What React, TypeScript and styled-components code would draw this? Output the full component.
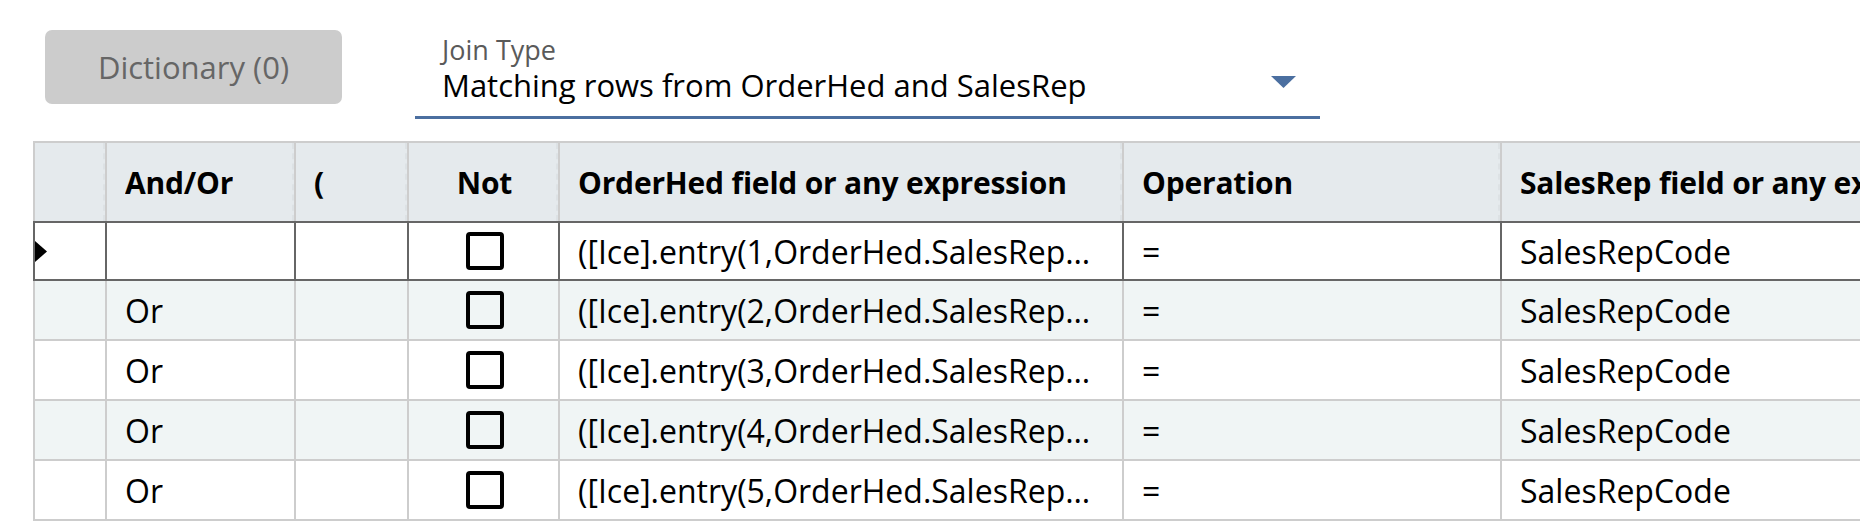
import React from "react";
import styled, { createGlobalStyle } from "styled-components";

const GlobalStyle = createGlobalStyle`
    html, body {
        margin: 0;
        padding: 0;
        background: #ffffff;
        overflow: hidden;
    }
    body {
        font-family: "Open Sans", "Noto Sans", sans-serif;
        color: #000;
    }
`;

const Page = styled.div`
    width: 1860px;
    height: 530px;
    overflow: hidden;
`;

const Toolbar = styled.div`
    display: flex;
    align-items: flex-start;
    padding: 30px 0 0 45px;
`;

const DictionaryButton = styled.button`
    width: 297px;
    height: 74px;
    border: none;
    border-radius: 7px;
    background: #cccccc;
    color: #666666;
    font-family: inherit;
    font-size: 31px;
    padding: 0;
    cursor: default;
`;

const Field = styled.div`
    box-sizing: border-box;
    width: 905px;
    margin: 4px 0 0 73px;
    padding: 0 24px 12px 27px;
    border-bottom: 3px solid #4b6fa0;
`;

const FieldLabel = styled.div`
    font-size: 27px;
    line-height: 32px;
    color: #5a5a5a;
`;

const ValueRow = styled.div`
    display: flex;
    align-items: center;
    justify-content: space-between;
`;

const FieldValue = styled.div`
    font-size: 31px;
    line-height: 38px;
    color: #000;
`;

const Caret = styled.svg`
    width: 25px;
    height: 12px;
    margin-bottom: 6px;
    fill: #4b6fa0;
`;

const Grid = styled.div`
    margin: 22px 0 0 33px;
    width: max-content;
`;

const Row = styled.div<{ $selected?: boolean; $alt?: boolean; $header?: boolean }>`
    display: flex;
    box-sizing: border-box;
    height: ${(p) => (p.$header ? 80 : 60)}px;
    background: ${(p) => (p.$header ? "#e5eaed" : p.$alt ? "#f0f5f5" : "#ffffff")};
    border-left: 2px solid ${(p) => (p.$selected ? "#666666" : "#cdcdcd")};
    border-top: ${(p) =>
        p.$header ? "2px solid #cdcdcd" : p.$selected ? "2px solid #666666" : "none"};
    border-bottom: ${(p) => (p.$header ? "none" : `2px solid ${p.$selected ? "#666666" : "#cdcdcd"}`)};
`;

const Cell = styled.div<{ $w: number; $center?: boolean; $dark?: boolean; $header?: boolean }>`
    position: relative;
    box-sizing: border-box;
    flex: 0 0 ${(p) => p.$w}px;
    width: ${(p) => p.$w}px;
    display: flex;
    align-items: center;
    justify-content: ${(p) => (p.$center ? "center" : "flex-start")};
    padding: 0 16px 0 18px;
    border-right: 2px solid ${(p) => (p.$dark ? "#666666" : "#cdcdcd")};
    font-size: ${(p) => (p.$header ? 30 : 32)}px;
    font-weight: ${(p) => (p.$header ? 700 : 400)};
    letter-spacing: ${(p) => (p.$header ? "-0.2px" : "0")};
    color: #000;
    overflow: hidden;

    ${(p) =>
        p.$header &&
        `
        &::after {
            content: "";
            position: absolute;
            top: 0;
            bottom: 0;
            right: 0;
            border-right: 2px dashed #dde2e5;
        }
    `}
`;

const CellText = styled.span`
    min-width: 0;
    overflow: hidden;
    text-overflow: ellipsis;
    white-space: nowrap;
`;

const Indicator = styled.svg`
    width: 12px;
    height: 21px;
    margin-left: -18px;
    fill: #000;
`;

const CheckBox = styled.span`
    box-sizing: border-box;
    width: 38px;
    height: 38px;
    border: 4px solid #000;
    border-radius: 4px;
    background: transparent;
`;

const widths = [72, 189, 113, 151, 564, 378, 540];

const headers = [
    "",
    "And/Or",
    "(",
    "Not",
    "OrderHed field or any expression",
    "Operation",
    "SalesRep field or any ex",
];

// the grid shows the expression column already clipped
const rows = [1, 2, 3, 4, 5].map((n) => ({
    andOr: n === 1 ? "" : "Or",
    expr: `([Ice].entry(${n},OrderHed.SalesRep\u2026`,
    op: "=",
    right: "SalesRepCode",
}));

const App = () => {
    return (
        <Page>
            <GlobalStyle />
            <Toolbar>
                <DictionaryButton>Dictionary (0)</DictionaryButton>
                <Field>
                    <FieldLabel>Join Type</FieldLabel>
                    <ValueRow>
                        <FieldValue>Matching rows from OrderHed and SalesRep</FieldValue>
                        <Caret viewBox="0 0 25 12">
                            <polygon points="0,0 25,0 12.5,12" />
                        </Caret>
                    </ValueRow>
                </Field>
            </Toolbar>
            <Grid>
                <Row $header>
                    {headers.map((h, i) => (
                        <Cell key={i} $w={widths[i]} $header $center={i === 3}>
                            <CellText>{h}</CellText>
                        </Cell>
                    ))}
                </Row>
                {rows.map((r, idx) => {
                    const selected = idx === 0;
                    return (
                        <Row key={idx} $selected={selected} $alt={idx % 2 === 1}>
                            <Cell $w={widths[0]} $dark={selected}>
                                {selected && (
                                    <Indicator viewBox="0 0 12 21">
                                        <polygon points="0,0 12,10.5 0,21" />
                                    </Indicator>
                                )}
                            </Cell>
                            <Cell $w={widths[1]} $dark={selected}>
                                <CellText>{r.andOr}</CellText>
                            </Cell>
                            <Cell $w={widths[2]} $dark={selected} />
                            <Cell $w={widths[3]} $dark={selected} $center>
                                <CheckBox />
                            </Cell>
                            <Cell $w={widths[4]} $dark={selected}>
                                <CellText>{r.expr}</CellText>
                            </Cell>
                            <Cell $w={widths[5]} $dark={selected}>
                                <CellText>{r.op}</CellText>
                            </Cell>
                            <Cell $w={widths[6]} $dark={selected}>
                                <CellText>{r.right}</CellText>
                            </Cell>
                        </Row>
                    );
                })}
            </Grid>
        </Page>
    );
};

export default App;
